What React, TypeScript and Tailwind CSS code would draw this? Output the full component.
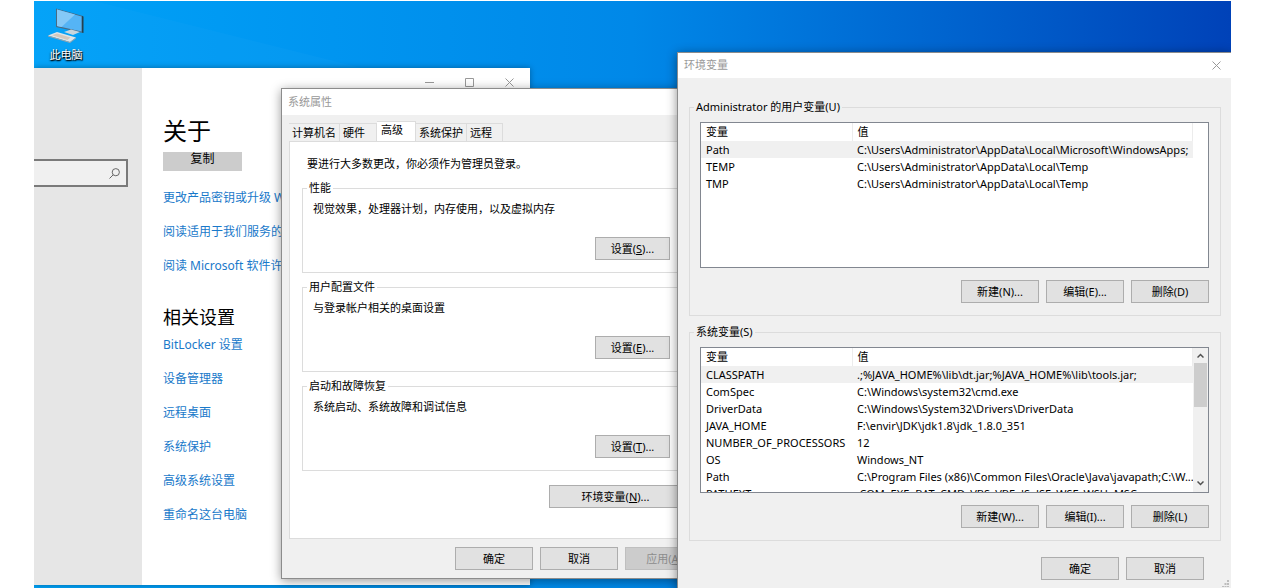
import React from "react";

type Variable = { name: string; value: string };

const userVariables: Variable[] = [
  { name: "Path", value: "C:\\Users\\Administrator\\AppData\\Local\\Microsoft\\WindowsApps;" },
  { name: "TEMP", value: "C:\\Users\\Administrator\\AppData\\Local\\Temp" },
  { name: "TMP", value: "C:\\Users\\Administrator\\AppData\\Local\\Temp" },
];

const systemVariables: Variable[] = [
  { name: "CLASSPATH", value: ".;%JAVA_HOME%\\lib\\dt.jar;%JAVA_HOME%\\lib\\tools.jar;" },
  { name: "ComSpec", value: "C:\\Windows\\system32\\cmd.exe" },
  { name: "DriverData", value: "C:\\Windows\\System32\\Drivers\\DriverData" },
  { name: "JAVA_HOME", value: "F:\\envir\\JDK\\jdk1.8\\jdk_1.8.0_351" },
  { name: "NUMBER_OF_PROCESSORS", value: "12" },
  { name: "OS", value: "Windows_NT" },
  { name: "Path", value: "C:\\Program Files (x86)\\Common Files\\Oracle\\Java\\javapath;C:\\W..." },
  { name: "PATHEXT", value: ".COM;.EXE;.BAT;.CMD;.VBS;.VBE;.JS;.JSE;.WSF;.WSH;.MSC" },
];

const productLinks = ["更改产品密钥或升级 W", "阅读适用于我们服务的", "阅读 Microsoft 软件许"];
const relatedLinks = ["BitLocker 设置", "设备管理器", "远程桌面", "系统保护", "高级系统设置", "重命名这台电脑"];

function PushButton({
  children,
  className = "w-[78px]",
  disabled = false,
}: {
  children: React.ReactNode;
  className?: string;
  disabled?: boolean;
}) {
  return (
    <button
      type="button"
      disabled={disabled}
      className={`h-[23px] shrink-0 border border-[#adadad] bg-[#e1e1e1] text-center leading-5 whitespace-nowrap disabled:border-[#bfbfbf] disabled:bg-[#cccccc] disabled:text-[#8d8d8d] ${className}`}
    >
      {children}
    </button>
  );
}

function CloseIcon() {
  return (
    <svg className="size-[9px]" viewBox="0 0 9 9" fill="none" stroke="#999" aria-hidden="true">
      <path d="M.5.5l8 8M8.5.5l-8 8" />
    </svg>
  );
}

function ComputerIcon() {
  return (
    <svg className="h-9 w-9" viewBox="0 0 36 36" aria-hidden="true">
      <path d="M8 1.500L35 9V26L8 20z" fill="#4a6b83" />
      <path d="M9 2.500L33.500 9.500V24.500L9 19z" fill="#55b4f5" />
      <path d="M9 2.500L27 7.600L13.500 20L9 19z" fill="#85c9f7" />
      <path d="M34 9L35.500 9.400V26L34 25.600z" fill="#26404f" />
      <path d="M16 25l7-2.500 9 2.500-7 3z" fill="#c9d6dd" />
      <path d="M0 28.500l9-3.500 19 5.500-6 4.500z" fill="#dfe5e8" />
      <path d="M0 28.500l22 6.500 6-4.500v1L22 36 0 29.500z" fill="#9aa5ab" />
      <path d="M4 28.300l5-1.900 13.500 4.200-3 2.300z" fill="#d3c8bd" />
    </svg>
  );
}

function AboutWindow() {
  return (
    <section className="absolute top-[67px] bottom-[3px] left-0 flex w-[496px] bg-white shadow-[0_0_6px_rgba(0,0,0,0.35)]">
      <aside className="w-[108px] shrink-0 bg-[#e6e6e6] pt-[91px] pr-3.5">
        <label className="flex h-7 items-center border-2 border-l-0 border-[#7a7a7a] bg-[#f0f0f0] pr-1.5">
          <input type="search" aria-label="查找设置" className="h-full w-full min-w-0 bg-transparent px-2 text-xs outline-none" />
          <svg className="size-[11px] shrink-0" viewBox="0 0 11 11" fill="none" stroke="#666" aria-hidden="true">
            <circle cx="6.800" cy="4.200" r="3.600" />
            <path d="M4.200 6.800L.5 10.500" />
          </svg>
        </label>
      </aside>
      <div className="flex min-w-0 grow flex-col items-start pl-[21px]">
        <div className="flex h-7 items-center gap-[31px] self-end pr-4">
          <button type="button" aria-label="最小化">
            <svg className="size-[9px]" viewBox="0 0 9 9" stroke="#999" aria-hidden="true"><path d="M0 4.500h9" /></svg>
          </button>
          <button type="button" aria-label="最大化">
            <svg className="size-[9px]" viewBox="0 0 9 9" fill="none" stroke="#999" aria-hidden="true"><path d="M.5.5h8v8h-8z" /></svg>
          </button>
          <button type="button" aria-label="关闭"><CloseIcon /></button>
        </div>
        <h1 className="mt-[17px] text-2xl leading-9">关于</h1>
        <button type="button" className="mt-[3px] flex h-[19px] w-[79px] justify-center bg-[#cccccc] text-xs leading-[14px]">复制</button>
        <nav className="mt-[19px] flex flex-col items-start gap-[18px] text-xs leading-4 whitespace-nowrap text-[#1979ca]">
          {productLinks.map((t) => <a key={t} href="#">{t}</a>)}
        </nav>
        <h2 className="mt-[31px] text-lg leading-6">相关设置</h2>
        <nav className="mt-2 flex flex-col items-start gap-[18px] text-xs leading-4 whitespace-nowrap text-[#1979ca]">
          {relatedLinks.map((t) => <a key={t} href="#">{t}</a>)}
        </nav>
      </div>
    </section>
  );
}

function SettingsGroup({ title, text, accessKey }: { title: string; text: string; accessKey: string }) {
  return (
    <fieldset className="h-[93px] border border-[#dcdcdc] pr-[19px] pl-2.5">
      <legend className="-ml-1.5 px-0.5 leading-4">{title}</legend>
      <p className="mt-[5px] leading-4">{text}</p>
      <div className="mt-5 flex justify-end">
        <PushButton className="w-[75px]">设置(<u>{accessKey}</u>)...</PushButton>
      </div>
    </fieldset>
  );
}

const tabs = ["计算机名", "硬件", "高级", "系统保护", "远程"];

function SystemProperties() {
  return (
    <section className="absolute top-[87px] left-[247px] flex w-[430px] flex-col border border-[#8c8c8c] bg-[#f0f0f0] text-[11px] shadow-[0_2px_10px_rgba(0,0,0,0.4)]">
      <h2 className="h-[26px] bg-white pl-1.5 leading-[26px] text-[#999]">系统属性</h2>
      <div className="px-[7px] pt-[7px]">
        <div role="tablist" className="flex h-[19px] items-end">
          {tabs.map((t) => (
            <button
              key={t}
              type="button"
              role="tab"
              aria-selected={t === "高级"}
              className="h-[18px] border-t border-r border-[#dcdcdc] px-[3px] leading-4 whitespace-nowrap aria-selected:h-5 aria-selected:bg-white aria-selected:pr-3 aria-selected:pb-1 aria-selected:pl-1 nth-2:pr-[11px] last:pr-2.5"
            >
              {t}
            </button>
          ))}
        </div>
        <div className="flex h-[398px] flex-col border border-[#dcdcdc] bg-white px-3 pt-3.5">
          <p className="pl-[5px] leading-4">要进行大多数更改，你必须作为管理员登录。</p>
          <div className="mt-2 flex flex-col gap-1.5">
            <SettingsGroup title="性能" text="视觉效果，处理器计划，内存使用，以及虚拟内存" accessKey="S" />
            <SettingsGroup title="用户配置文件" text="与登录帐户相关的桌面设置" accessKey="E" />
            <SettingsGroup title="启动和故障恢复" text="系统启动、系统故障和调试信息" accessKey="T" />
          </div>
          <div className="mt-3.5 flex justify-end">
            <PushButton className="w-[141px] pr-2">环境变量(<u>N</u>)...</PushButton>
          </div>
        </div>
      </div>
      <div className="flex justify-end gap-[7px] px-[7px] py-2">
        <PushButton>确定</PushButton>
        <PushButton>取消</PushButton>
        <PushButton disabled>应用(<u>A</u>)</PushButton>
      </div>
    </section>
  );
}

function VariableList({ rows, scrollable = false }: { rows: Variable[]; scrollable?: boolean }) {
  return (
    <div className="flex h-[146px] overflow-hidden border border-[#828790] bg-white">
      <div className="min-w-0 grow overflow-hidden">
        <table className="w-full table-fixed border-collapse text-left whitespace-nowrap">
          <thead>
            <tr className="h-[18px] leading-[18px]">
              <th className="w-[151px] border-r border-[#ececec] p-0 pl-[5px] font-normal">变量</th>
              <th className="border-r border-[#ececec] p-0 pl-[5px] font-normal">值</th>
            </tr>
          </thead>
          <tbody>
            {rows.map((r) => (
              <tr key={r.name} className="h-[17px] leading-[17px] first:bg-[#f0f0f0]">
                <td className="p-0 pl-[5px]">{r.name}</td>
                <td className="p-0 pl-[5px]">{r.value}</td>
              </tr>
            ))}
          </tbody>
        </table>
      </div>
      {scrollable ? (
        <div className="flex w-[15px] shrink-0 flex-col items-center bg-[#f0f0f0]">
          <svg className="h-[15px] w-[7px] shrink-0" viewBox="0 0 7 15" fill="none" stroke="#505050" strokeWidth="1.500" aria-hidden="true">
            <path d="M.5 9.500l3-3 3 3" />
          </svg>
          <div className="h-11 w-[13px] bg-[#cdcdcd]" />
          <svg className="mt-auto h-[17px] w-[7px] shrink-0" viewBox="0 0 7 17" fill="none" stroke="#505050" strokeWidth="1.500" aria-hidden="true">
            <path d="M.5 6.500l3 3 3-3" />
          </svg>
        </div>
      ) : (
        <div className="w-[15px] shrink-0" />
      )}
    </div>
  );
}

function VariableGroup({
  title,
  rows,
  scrollable,
  actions,
}: {
  title: string;
  rows: Variable[];
  scrollable?: boolean;
  actions: string[];
}) {
  return (
    <fieldset className="min-w-0 border border-[#dcdcdc] pr-[11px] pb-3 pl-2.5">
      <legend className="-ml-1.5 px-0.5 leading-4">{title}</legend>
      <div className="mt-[7px]">
        <VariableList rows={rows} scrollable={scrollable} />
      </div>
      <div className="mt-3 flex justify-end gap-[7px]">
        {actions.map((a) => <PushButton key={a}>{a}</PushButton>)}
      </div>
    </fieldset>
  );
}

function EnvironmentVariables() {
  return (
    <section className="absolute top-[51px] right-0 -bottom-1 left-[643px] flex flex-col border border-r-0 border-[#8c8c8c] bg-[#f0f0f0] text-[11px] shadow-[0_2px_10px_rgba(0,0,0,0.45)]">
      <header className="flex h-[25px] shrink-0 items-center justify-between bg-white pr-2.5 pl-1.5">
        <h2 className="text-[#999]">环境变量</h2>
        <button type="button" aria-label="关闭"><CloseIcon /></button>
      </header>
      <div className="flex flex-col gap-2 pt-[21px] pr-2.5 pl-[11px]">
        <VariableGroup
          title="Administrator 的用户变量(U)"
          rows={userVariables}
          actions={["新建(N)...", "编辑(E)...", "删除(D)"]}
        />
        <VariableGroup
          title="系统变量(S)"
          rows={systemVariables}
          scrollable
          actions={["新建(W)...", "编辑(I)...", "删除(L)"]}
        />
      </div>
      <div className="mt-4 flex justify-end gap-[7px] pr-[27px]">
        <PushButton>确定</PushButton>
        <PushButton>取消</PushButton>
      </div>
      <svg className="absolute right-0.5 bottom-1 size-[7px]" viewBox="0 0 7 7" fill="#bdbdbd" aria-hidden="true">
        <path d="M5 0h2v2H5zM2.500 3h2v2h-2zM5 3h2v2H5zM0 6h2v1H0zM2.500 6h2v1h-2zM5 6h2v1H5z" />
      </svg>
    </section>
  );
}

export default function App() {
  return (
    <main className="h-screen min-h-[588px] overflow-hidden bg-white pt-px pr-[41px] pl-[34px] font-['Noto_Sans','Noto_Sans_CJK_SC',sans-serif] text-black">
      <div className="relative h-full overflow-hidden bg-linear-to-r from-[#00a2f8] via-[#0088e8] via-50% to-[#0042b8]">
        <svg className="absolute inset-x-0 top-0 h-[90px] w-full" viewBox="0 0 1197 90" preserveAspectRatio="none" aria-hidden="true">
          <path d="M60 0L420 90H0V0z" fill="#fff" opacity=".02" />
        </svg>
        <a href="#" className="absolute top-1.5 left-2 flex w-12 flex-col items-center text-[11px] leading-4 text-white [text-shadow:0_1px_2px_#000,1px_1px_1px_#000]">
          <ComputerIcon />
          <span className="mt-1">此电脑</span>
        </a>
        <AboutWindow />
        <SystemProperties />
        <EnvironmentVariables />
      </div>
    </main>
  );
}
